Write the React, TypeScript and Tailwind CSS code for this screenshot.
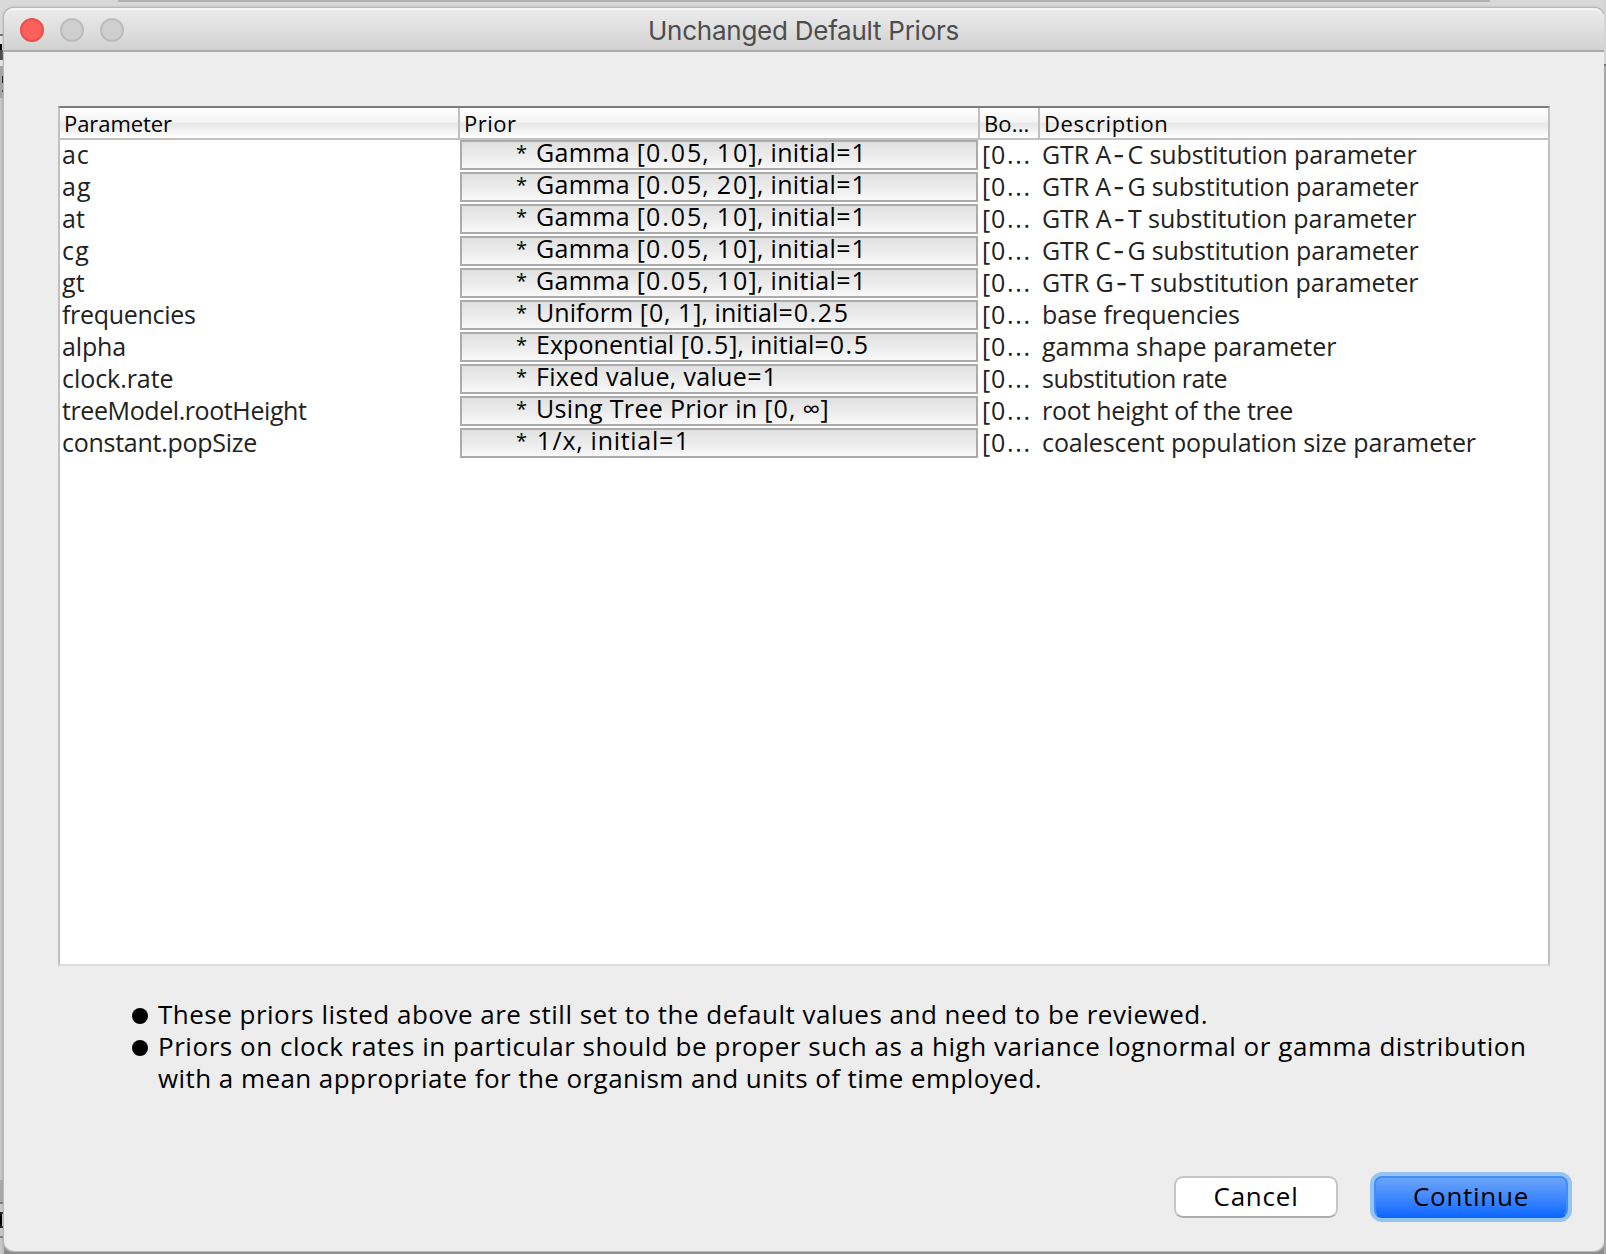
import { useLayoutEffect, useRef, useState } from "react";

type FitProps = { text: string; width: number; className?: string };

/**
 * One line of text whose tracking is adjusted so that it fills `width` pixels.
 * Digits, periods and hyphens are set a little wider than the letters.
 */
function Fit({ text, width, className = "" }: FitProps) {
  const ref = useRef<HTMLSpanElement>(null);
  const [spacing, setSpacing] = useState(0);
  useLayoutEffect(() => {
    if (!ref.current) return;
    const natural = ref.current.getBoundingClientRect().width;
    setSpacing((width - natural) / text.length);
  }, [text, width]);
  return (
    <span ref={ref} className={`inline-block whitespace-pre ${className}`} style={{ letterSpacing: `${spacing}px` }}>
      {text.split(/(-|\d[\d.]*)/).map((part, i) => {
        if (part === "-") {
          return (
            <span key={i} className="mr-[3px] ml-[2px] font-['Inter',sans-serif] leading-none">
              -
            </span>
          );
        }
        if (/^\d/.test(part)) {
          return (
            <span key={i}>
              {part.split("").map((digit, j) => (
                <span key={j} className="px-[0.8px]">
                  {digit}
                </span>
              ))}
            </span>
          );
        }
        return part;
      })}
    </span>
  );
}

type Row = { name: string; nameW: number; prior: string; priorW: number; desc: string; descW: number };

const rows: Row[] = [
  { name: "ac", nameW: 27.5, prior: "Gamma [0.05, 10], initial=1", priorW: 331, desc: "GTR A-C substitution parameter", descW: 374.5 },
  { name: "ag", nameW: 29.5, prior: "Gamma [0.05, 20], initial=1", priorW: 331, desc: "GTR A-G substitution parameter", descW: 376.5 },
  { name: "at", nameW: 23, prior: "Gamma [0.05, 10], initial=1", priorW: 331, desc: "GTR A-T substitution parameter", descW: 374.5 },
  { name: "cg", nameW: 28, prior: "Gamma [0.05, 10], initial=1", priorW: 331, desc: "GTR C-G substitution parameter", descW: 376.5 },
  { name: "gt", nameW: 23, prior: "Gamma [0.05, 10], initial=1", priorW: 331, desc: "GTR G-T substitution parameter", descW: 376.5 },
  { name: "frequencies", nameW: 133.5, prior: "Uniform [0, 1], initial=0.25", priorW: 313, desc: "base frequencies", descW: 198 },
  { name: "alpha", nameW: 64, prior: "Exponential [0.5], initial=0.5", priorW: 333, desc: "gamma shape parameter", descW: 294.5 },
  { name: "clock.rate", nameW: 111.5, prior: "Fixed value, value=1", priorW: 242, desc: "substitution rate", descW: 185 },
  { name: "treeModel.rootHeight", nameW: 244.5, prior: "Using Tree Prior in [0, ∞]", priorW: 293, desc: "root height of the tree", descW: 251 },
  { name: "constant.popSize", nameW: 195, prior: "1/x, initial=1", priorW: 154.5, desc: "coalescent population size parameter", descW: 434 },
];

const columns = "grid grid-cols-[400px_520px_60px_1fr]";

function TitleBar() {
  return (
    <div className="flex h-11 shrink-0 items-center rounded-t-[10px] border-t-2 border-b-2 border-t-[#f5f5f5] border-b-[#ababab] bg-gradient-to-b from-[#ebebeb] to-[#d2d2d2] pl-4">
      <div className="flex w-[628px] gap-4">
        <div className="size-6 rounded-full border-2 border-[#e8504b] bg-[#fd605b]" />
        <div className="size-6 rounded-full border-2 border-[#bcbcbc] bg-[#cfcfcf]" />
        <div className="size-6 rounded-full border-2 border-[#bcbcbc] bg-[#cfcfcf]" />
      </div>
      <div className="pt-0.5 font-['Inter',sans-serif] text-[26px] leading-10 text-[#4d4d4d]">
        <Fit text="Unchanged Default Priors" width={311} />
      </div>
    </div>
  );
}

function HeaderCell({ label, width, last }: { label: string; width: number; last?: boolean }) {
  return (
    <div className={`overflow-hidden pl-1 ${last ? "" : "border-r-2 border-[#c0c0c0]"}`}>
      <Fit text={label} width={width} />
    </div>
  );
}

function PriorsTable() {
  return (
    <div className="h-[860px] w-[1492px] border-2 border-t-[#7a7a7a] border-r-[#c0c0c0] border-b-[#dcdcdc] border-l-[#c0c0c0] bg-white">
      <div
        className={`${columns} h-8 border-b-2 border-[#c0c0c0] bg-[linear-gradient(#ffffff_0%,#f4f4f4_45%,#e7e7e7_52%,#f0f0f0_70%,#ffffff_100%)] text-[22px] leading-[31px] font-medium text-black`}
      >
        <HeaderCell label="Parameter" width={108} />
        <HeaderCell label="Prior" width={52.5} />
        <HeaderCell label="Bo..." width={45.5} />
        <HeaderCell label="Description" width={124.5} last />
      </div>
      {rows.map((row) => (
        <div key={row.name} className={`${columns} h-8 text-[25px] leading-7 font-medium text-[#222222]`}>
          <div className="pl-0.5">
            <Fit text={row.name} width={row.nameW} />
          </div>
          <div className="flex h-[30px] w-[518px] border-2 border-[#ababab] bg-gradient-to-b from-[#e0e0e0] to-[#f8f8f8] pl-[54px] leading-5 text-black">
            <span className="w-5 text-[20px] leading-[22px]">*</span>
            <Fit text={row.prior} width={row.priorW} />
          </div>
          <div className="pl-0.5">
            <Fit text="[0..." width={49} />
          </div>
          <div className="pl-0.5">
            <Fit text={row.desc} width={row.descW} />
          </div>
        </div>
      ))}
    </div>
  );
}

function Notes() {
  return (
    <ul className="mt-8 pl-[128px] text-[26px] leading-8 font-medium text-black">
      <li className="flex items-center gap-2.5">
        <span className="mt-[3px] size-4 rounded-full bg-black" />
        <Fit text="These priors listed above are still set to the default values and need to be reviewed." width={1050} />
      </li>
      <li className="flex items-center gap-2.5">
        <span className="mt-[3px] size-4 rounded-full bg-black" />
        <Fit
          text="Priors on clock rates in particular should be proper such as a high variance lognormal or gamma distribution"
          width={1368.5}
        />
      </li>
      <li className="pl-[26px]">
        <Fit text="with a mean appropriate for the organism and units of time employed." width={884} />
      </li>
    </ul>
  );
}

function Actions() {
  return (
    <div className="mt-auto flex items-center justify-end gap-8 pr-8 pb-[29px] text-[26px] leading-9 font-medium text-black">
      <button className="flex h-[42px] w-[164px] justify-center rounded-[9px] border-2 border-[#c6c6c6] border-b-[#adadad] bg-white">
        <Fit text="Cancel" width={85} />
      </button>
      <button className="flex h-[50px] w-[202px] justify-center rounded-[12px] border-4 border-[#97c3f3] bg-[#97c3f3]">
        <span className="flex h-[42px] w-[194px] shrink-0 justify-center rounded-[8px] border-2 border-[#3f8ef5] border-b-[#0d68fa] bg-gradient-to-b from-[#6ba5fb] to-[#0c68ff]">
          <Fit text="Continue" width={116} />
        </span>
      </button>
    </div>
  );
}

/** The sliver of the main window that shows to the left of the dialog. */
function LeftSliver() {
  return (
    <div className="flex h-[1254px] w-1 shrink-0 flex-col overflow-hidden bg-gradient-to-r from-[#cbcbcb] to-[#b8b8b8]">
      <div className="h-[34px] shrink-0 bg-[#d9d9d9]" />
      <div className="flex h-8 shrink-0 flex-col border-t-2 border-[#6e6e6e] bg-[#e4e4e4] pt-2">
        <div className="h-1.5 w-0.5 bg-black" />
        <div className="h-2.5 w-1 bg-[#4a4a4a]" />
      </div>
      <div className="flex h-8 shrink-0 flex-col bg-[#a6a6a6] pt-2.5 pl-0.5">
        <div className="h-[7px] w-0.5 bg-black" />
        <div className="mt-[7px] h-0.5 w-0.5 bg-[#333333]" />
      </div>
      <div className="h-[1082px] shrink-0" />
      <div className="h-[22px] shrink-0 bg-[#a9a9a9]" />
      <div className="flex h-9 shrink-0 flex-col border-y-2 border-[#7d7d7d] bg-[#c9c9c9] pt-2">
        <div className="h-0.5 w-1 bg-[#222222]" />
        <div className="h-3 w-0.5 bg-black" />
        <div className="h-0.5 w-1 bg-[#222222]" />
      </div>
    </div>
  );
}

export default function App() {
  return (
    <div className="flex h-[1254px] w-[1606px] overflow-hidden bg-[linear-gradient(#dadada_0px,#cccccc_60px,#b4b4b4_1240px,#8c8c8c_1251px,#8c8c8c_1254px)] font-['Open_Sans',sans-serif]">
      <LeftSliver />
      <div className="flex w-[1600px] shrink-0 flex-col">
        <div className="h-2 shrink-0 bg-[#d9d9d9] pl-[114px]">
          <div className="h-0.5 w-[1372px] bg-[#b2b2b2]" />
        </div>
        <div className="flex h-[1243px] flex-col rounded-[10px] bg-[#ededed] shadow-[0_0_0_1px_#b9b9b9,0_0_2px_1px_#a0a0a0]">
          <TitleBar />
          <div className="flex grow flex-col pt-[54px]">
            <div className="pl-[54px]">
              <PriorsTable />
            </div>
            <Notes />
            <Actions />
          </div>
        </div>
      </div>
      <div className="flex w-0.5 flex-col">
        <div className="h-16 bg-[#d4d4d4]" />
        <div className="h-0.5 bg-[#777777]" />
        <div className="grow bg-[#a8a8a8]" />
      </div>
    </div>
  );
}
